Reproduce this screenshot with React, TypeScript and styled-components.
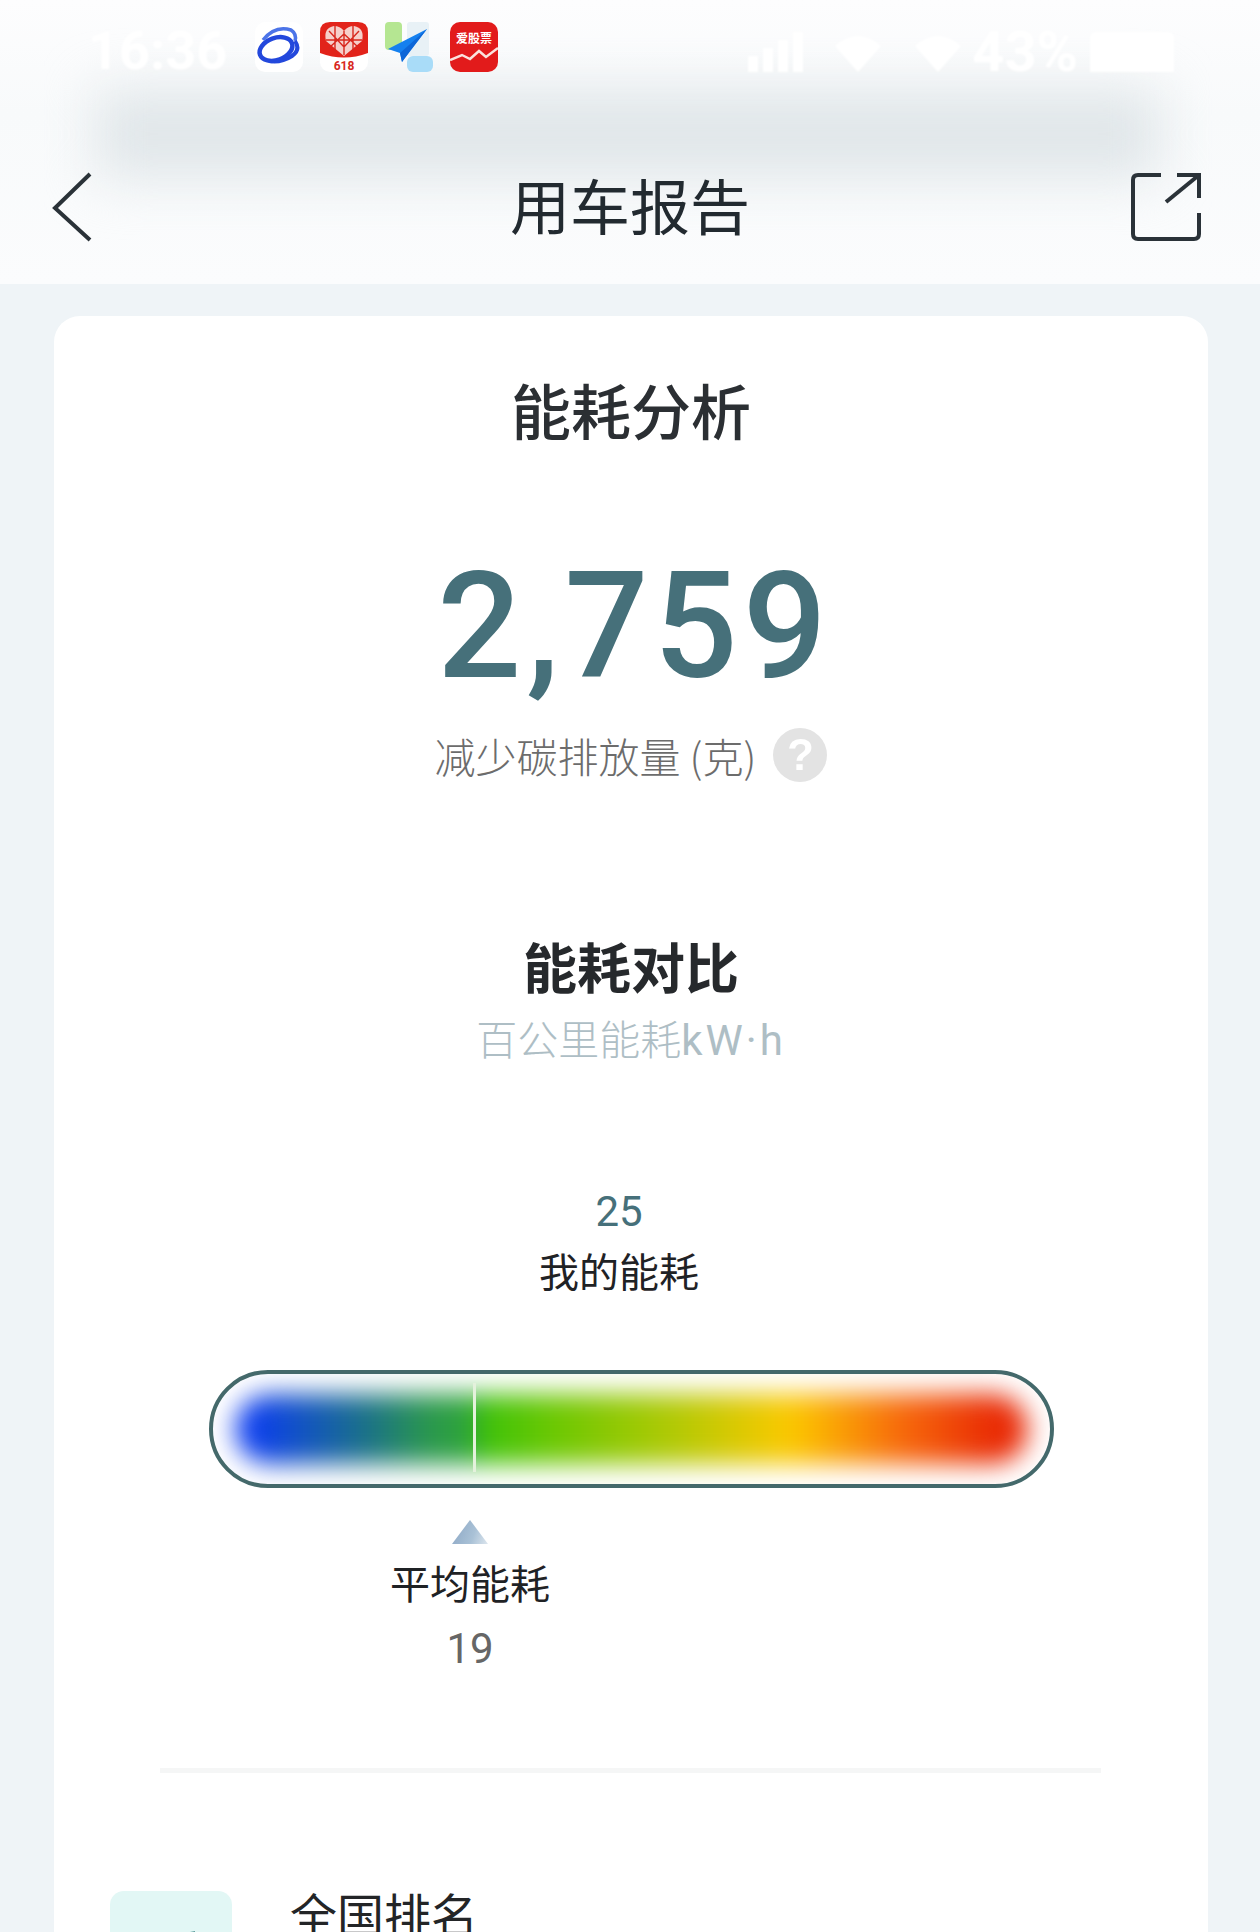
import React from 'react';
import styled, { createGlobalStyle } from 'styled-components';

const GlobalStyle = createGlobalStyle`
  html, body {
    margin: 0;
    padding: 0;
    background: #eff4f7;
  }
  #root {
    height: 1932px;
    overflow: hidden;
  }
`;

const CJK = `"Noto Sans CJK SC", "Noto Sans", sans-serif`;

const Page = styled.div`
  width: 1260px;
  height: 1932px;
  overflow: hidden;
  background: #eff4f7;
  font-family: ${CJK};
`;

const Header = styled.header`
  position: relative;
  height: 284px;
  background: linear-gradient(#fdfdfe, #f8fafb 40%, #fbfcfd);
  overflow: hidden;
`;

const BlurBand = styled.div`
  position: absolute;
  left: 96px;
  right: 100px;
  top: 90px;
  height: 88px;
  background: #e0e6e9;
  filter: blur(26px);
`;

const StatusBar = styled.div`
  position: relative;
  height: 94px;
  display: flex;
  align-items: flex-start;
  padding: 22px 86px 0 88px;
  box-sizing: border-box;
`;

const Clock = styled.span`
  width: 167px;
  margin-top: 4px;
  font-family: Roboto, sans-serif;
  font-size: 54px;
  line-height: 50px;
  font-weight: 700;
  color: #fff;
  filter: blur(1px);
`;

const AppIcons = styled.div`
  display: flex;
  gap: 17px;
`;

const AppIcon = styled.svg`
  display: block;
  width: 48px;
  height: 50px;
`;

const StatusRight = styled.div`
  margin-left: auto;
  margin-top: 10px;
  display: flex;
  align-items: flex-end;
  height: 40px;
  color: #fff;
  filter: blur(1px);
`;

const StatusText = styled.span`
  margin: 0 12px 0 11px;
  font-family: Roboto, sans-serif;
  font-size: 56px;
  line-height: 40px;
  font-weight: 700;
`;

const SignalBars = styled.div`
  display: flex;
  align-items: flex-end;
  gap: 5px;
  height: 40px;
  margin-right: 32px;
`;

const SignalBar = styled.i<{ $h: number }>`
  display: block;
  width: 10px;
  height: ${(p) => p.$h}px;
  background: #fff;
`;

const WifiGlyph = styled.svg<{ $gap: number }>`
  display: block;
  width: 46px;
  height: 38px;
  margin-right: ${(p) => p.$gap}px;
  fill: #fff;
`;

const Battery = styled.div`
  width: 84px;
  height: 40px;
  background: #fff;
  border-radius: 6px 6px 0 0;
`;

const NavBar = styled.div`
  position: relative;
  height: 190px;
  display: grid;
  grid-template-columns: 1fr auto 1fr;
  align-items: start;
  padding: 78px 52px 0;
  box-sizing: border-box;
`;

const NavTitle = styled.h1`
  margin: -3px 0 0;
  font-size: 60px;
  line-height: 70px;
  font-weight: 400;
  color: #222a30;
`;

const NavIcon = styled.svg<{ $end?: boolean }>`
  display: block;
  justify-self: ${(p) => (p.$end ? 'end' : 'start')};
  margin-right: ${(p) => (p.$end ? 7 : 0)}px;
  width: ${(p) => (p.$end ? 70 : 40)}px;
  height: 70px;
  fill: none;
  stroke: #2a3238;
  stroke-width: 4;
`;

const Card = styled.main`
  margin: 32px 52px 0 54px;
  height: 1700px;
  background: #fff;
  border-radius: 26px 26px 0 0;
  display: flex;
  flex-direction: column;
  align-items: stretch;
`;

const CardTitle = styled.h2`
  margin: 57px 0 0;
  text-align: center;
  font-size: 60px;
  line-height: 72px;
  font-weight: 500;
  color: #2b2f33;
`;

const BigNumber = styled.div`
  margin-top: 107px;
  padding-left: 7px;
  text-align: center;
  font-family: Roboto, sans-serif;
  font-size: 148px;
  line-height: 150px;
  font-weight: 500;
  letter-spacing: 5px;
  color: #46707a;
`;

const SavingRow = styled.div`
  margin-top: 23px;
  display: flex;
  justify-content: center;
  align-items: center;
  gap: 17px;
  height: 60px;
  font-size: 41px;
  font-weight: 300;
  color: #6c6c6c;
`;

const HelpDot = styled.span`
  width: 54px;
  height: 54px;
  border-radius: 50%;
  background: #e3e3e3;
  color: #fff;
  display: flex;
  align-items: center;
  justify-content: center;
  font-family: "Liberation Sans", sans-serif;
  font-size: 44px;
  font-weight: 700;
  filter: blur(0.6px);
`;

const CompareTitle = styled.h3`
  margin: 150px 0 0;
  text-align: center;
  font-size: 54px;
  line-height: 62px;
  font-weight: 700;
  color: #26292c;
`;

const CompareUnit = styled.div`
  margin-top: 15px;
  text-align: center;
  font-size: 41px;
  line-height: 50px;
  font-weight: 300;
  color: #aebec5;
`;

const UnitLatin = styled.span`
  font-family: Roboto, sans-serif;
  font-size: 42px;
  font-weight: 400;
  letter-spacing: 3px;
`;

const ValueLabel = styled.div<{ $center: number; $top: number; $gap: number }>`
  display: flex;
  flex-direction: column;
  gap: ${(p) => p.$gap}px;
  width: 240px;
  margin-top: ${(p) => p.$top}px;
  margin-left: ${(p) => p.$center - 54 - 120}px;
  text-align: center;
  font-size: 40px;
  line-height: 58px;
`;

const LabelName = styled.div`
  color: #1f2225;
`;

const LabelValue = styled.div<{ $tone: string }>`
  font-family: Roboto, sans-serif;
  font-size: 42px;
  color: ${(p) => p.$tone};
`;

const BarFrame = styled.div`
  position: relative;
  margin: 71px 154px 0 155px;
  height: 118px;
  box-sizing: border-box;
  border: 4px solid #44696b;
  border-radius: 59px;
  overflow: hidden;
  background: #fff;
`;

const BarGlow = styled.div`
  height: 70px;
  margin: 20px 22px 0;
  border-radius: 35px;
  filter: blur(13px);
  background: linear-gradient(
    90deg,
    #0c3df0 2%,
    #1a6f8c 16%,
    #2b9a4a 25%,
    #2ea53a 30%,
    #3cc20a 31%,
    #6bc803 40%,
    #b5c905 56%,
    #fcc900 70%,
    #f76a0c 84%,
    #e92a05 96%
  );
`;

const BarMark = styled.i`
  position: absolute;
  left: 260px;
  top: 9px;
  width: 3px;
  height: 89px;
  background: #e4f1dc;
`;

const Pointer = styled.div<{ $center: number }>`
  width: 36px;
  height: 24px;
  margin-top: 32px;
  margin-left: ${(p) => p.$center - 54 - 18}px;
  clip-path: polygon(50% 0, 100% 100%, 0 100%);
  background: linear-gradient(110deg, #8ba6c4, #a9c1d6 60%, #dde6ee);
`;

const Divider = styled.hr`
  margin: 90px 107px 0 106px;
  border: 0;
  height: 5px;
  background: #f5f6f6;
`;

const RankRow = styled.section`
  margin-top: 118px;
  padding-left: 56px;
  display: flex;
  gap: 58px;
`;

const RankIcon = styled.div`
  position: relative;
  width: 122px;
  height: 122px;
  border-radius: 14px;
  overflow: hidden;
  background: #e2f7f5;
`;

const RankGlyph = styled.svg`
  position: absolute;
  left: 60px;
  top: 40px;
  width: 40px;
  height: 60px;
`;

const RankTitle = styled.div`
  margin-top: -5px;
  font-size: 47px;
  line-height: 54px;
  color: #232527;
`;

const Wifi = ({ gap }: { gap: number }) => (
  <WifiGlyph $gap={gap} viewBox="0 0 46 38">
    <path d="M0 12 Q23 -8 46 12 L23 38 Z" />
  </WifiGlyph>
);

export default function App() {
  return (
    <Page>
      <GlobalStyle />
      <Header>
        <BlurBand />
        <StatusBar>
          <Clock>16:36</Clock>
          <AppIcons>
            <AppIcon viewBox="0 0 48 50">
              <rect width="48" height="50" rx="10" fill="#fff" />
              <ellipse cx="21" cy="27" rx="17" ry="11" transform="rotate(-20 21 27)" fill="none" stroke="#2348dc" strokeWidth="4.5" />
              <path d="M8 18 Q20 3 36 8 Q42 12 40 19" fill="none" stroke="#4c74e8" strokeWidth="3.5" />
              <path d="M40 19 Q46 28 37 34 Q26 41 14 39" fill="none" stroke="#2348dc" strokeWidth="4" />
            </AppIcon>
            <AppIcon viewBox="0 0 48 50">
              <rect width="48" height="50" rx="10" fill="#fff" />
              <path d="M0 10 Q0 0 10 0 H38 Q48 0 48 10 V31 Q24 40 0 31 Z" fill="#e2231a" />
              <path d="M24 34 L6 19 Q3 6 14 4 Q20 4 24 9 Q28 4 34 4 Q45 6 42 19 Z" fill="#f6cfca" />
              <path d="M9 9 L24 25 L39 9 M24 9 V33 M6 18 H42 M9 26 L24 12 L39 26 M15 4 V30 M33 4 V30" fill="none" stroke="#d8281e" strokeWidth="1.4" />
              <text x="24" y="48" textAnchor="middle" fontSize="12" fontWeight="700" fontFamily="Roboto, sans-serif" fill="#d8281e">618</text>
            </AppIcon>
            <AppIcon viewBox="0 0 48 50">
              <rect x="0" y="0" width="17" height="28" rx="4" fill="#b5e692" />
              <rect x="22" y="0" width="22" height="34" rx="3" fill="#e8f1f6" />
              <rect x="22" y="34" width="26" height="16" rx="6" fill="#a9dcf8" />
              <path d="M42 7 L3 27 L15 31 L17 40 L24 30 Z" fill="#1480ef" />
              <path d="M42 7 L15 31 L17 40 Z" fill="#0c66d8" />
            </AppIcon>
            <AppIcon viewBox="0 0 48 50">
              <rect width="48" height="50" rx="10" fill="#e21b1b" />
              <text x="24" y="21" textAnchor="middle" fontSize="12" fontWeight="700" fontFamily={CJK} fill="#fff">爱股票</text>
              <path d="M0 38 L12 33 L20 37 L29 29 L36 35 L48 26" fill="none" stroke="#fbe3dd" strokeWidth="2.5" />
            </AppIcon>
          </AppIcons>
          <StatusRight>
            <SignalBars>
              <SignalBar $h={16} />
              <SignalBar $h={24} />
              <SignalBar $h={32} />
              <SignalBar $h={40} />
            </SignalBars>
            <Wifi gap={34} />
            <Wifi gap={0} />
            <StatusText>43%</StatusText>
            <Battery />
          </StatusRight>
        </StatusBar>
        <NavBar>
          <NavIcon viewBox="0 0 40 70">
            <path d="M38 2 L3 36 L38 68" />
          </NavIcon>
          <NavTitle>用车报告</NavTitle>
          <NavIcon $end viewBox="0 0 70 70">
            <path d="M30 3 H7 Q2 3 2 8 V62 Q2 67 7 67 H63 Q68 67 68 62 V41" />
            <path d="M46 3 H68 V26" />
            <path d="M68 3 L35 30" />
          </NavIcon>
        </NavBar>
      </Header>
      <Card>
        <CardTitle>能耗分析</CardTitle>
        <BigNumber>2,759</BigNumber>
        <SavingRow>
          <span>减少碳排放量 (克)</span>
          <HelpDot>?</HelpDot>
        </SavingRow>
        <CompareTitle>能耗对比</CompareTitle>
        <CompareUnit>
          百公里能耗<UnitLatin>kW·h</UnitLatin>
        </CompareUnit>
        <ValueLabel $center={619} $top={117} $gap={0}>
          <LabelValue $tone="#46707a">25</LabelValue>
          <LabelName>我的能耗</LabelName>
        </ValueLabel>
        <BarFrame>
          <BarGlow />
          <BarMark />
        </BarFrame>
        <Pointer $center={470} />
        <ValueLabel $center={470} $top={9} $gap={9}>
          <LabelName>平均能耗</LabelName>
          <LabelValue $tone="#666">19</LabelValue>
        </ValueLabel>
        <Divider />
        <RankRow>
          <RankIcon>
            <RankGlyph viewBox="0 0 40 60">
              <path d="M0 14 Q10 2 25 0 L25 60 L0 60 Z" fill="#5a9a9a" />
            </RankGlyph>
          </RankIcon>
          <RankTitle>全国排名</RankTitle>
        </RankRow>
      </Card>
    </Page>
  );
}
